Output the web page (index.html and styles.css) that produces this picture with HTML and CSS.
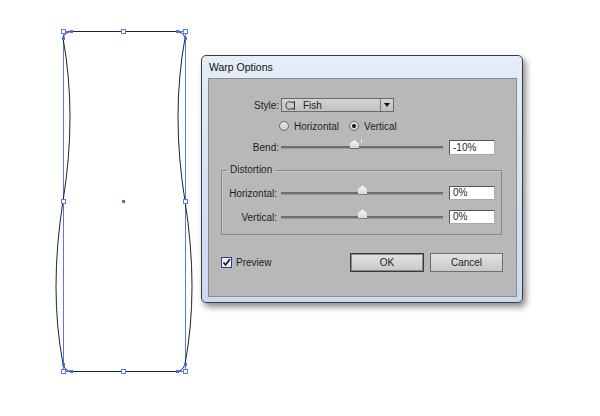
FILE: index.html
```html
<!DOCTYPE html>
<html lang="en">
<head>
  <meta charset="UTF-8" />
  <title>Warp Options</title>
  <link rel="stylesheet" href="styles.css">
</head>
<body>
  <div class="stage">
    <svg class="artboard" width="600" height="416" viewBox="0 0 600 416">
      <rect x="63.5" y="31.5" width="122" height="340" fill="none" stroke="#5876f5" stroke-width="1"/>
      <path d="M71,31.5 L177,31.5 Q183,32 185,38 Q171,115 185,201 Q199,290 185,364 Q183,371 177,371.5 L71,371.5 Q65,371 63,364 Q49,290 63,201 Q77,115 63,38 Q65,32 71,31.5 Z"
            fill="none" stroke="#222" stroke-width="1"/>
      <g fill="#fff" stroke="#5876f5" stroke-width="1">
        <rect x="61.5" y="29.5" width="4" height="4"/>
        <rect x="121.5" y="29.5" width="4" height="4"/>
        <rect x="183.5" y="29.5" width="4" height="4"/>
        <rect x="61.5" y="199.5" width="4" height="4"/>
        <rect x="183.5" y="199.5" width="4" height="4"/>
        <rect x="61.5" y="369.5" width="4" height="4"/>
        <rect x="121.5" y="369.5" width="4" height="4"/>
        <rect x="183.5" y="369.5" width="4" height="4"/>
      </g>
      <g fill="#4a6cf7">
        <rect x="70" y="30" width="3" height="3"/>
        <rect x="62" y="37" width="3" height="3"/>
        <rect x="176" y="30" width="3" height="3"/>
        <rect x="184" y="37" width="3" height="3"/>
        <rect x="62" y="363" width="3" height="3"/>
        <rect x="70" y="370" width="3" height="3"/>
        <rect x="176" y="370" width="3" height="3"/>
        <rect x="184" y="363" width="3" height="3"/>
        <rect x="122" y="200" width="3" height="3"/>
      </g>
    </svg>

    <div class="dialog">
      <div class="title">Warp Options</div>
      <div class="panel">
        <div class="row style-row">
          <span class="label">Style:</span>
          <div class="select">
            <svg class="fish" width="11" height="9" viewBox="0 0 11 9">
              <path d="M7,1.6 C5.2,0 1,0.3 1,4.5 C1,8.7 5.2,9 7,7.4 L9.5,8.5 L9.5,0.5 Z" fill="none" stroke="#333" stroke-width="1"/>
            </svg>
            <span class="select-text">Fish</span>
            <span class="select-btn"><span class="arrow"></span></span>
          </div>
        </div>

        <div class="row radio-row">
          <span class="radio"></span><span class="radio-text">Horizontal</span>
          <span class="radio checked"></span><span class="radio-text">Vertical</span>
        </div>

        <div class="row slider-row bend-row">
          <span class="label">Bend:</span>
          <div class="track">
            <span class="thumb" style="left: 45%"></span>
            <span class="tick"></span>
          </div>
          <div class="field">-10%</div>
        </div>

        <fieldset class="group">
          <legend>Distortion</legend>
          <div class="row slider-row">
            <span class="label small">Horizontal:</span>
            <div class="track"><span class="thumb" style="left: 50%"></span></div>
            <div class="field">0%</div>
          </div>
          <div class="row slider-row second">
            <span class="label small">Vertical:</span>
            <div class="track"><span class="thumb" style="left: 50%"></span></div>
            <div class="field">0%</div>
          </div>
        </fieldset>

        <div class="footer">
          <span class="checkbox">
            <svg width="9" height="9" viewBox="0 0 9 9"><path d="M1.5,4.5 L3.6,7 L7.8,1.2" fill="none" stroke="#111" stroke-width="1.6"/></svg>
          </span>
          <span class="check-text">Preview</span>
          <button class="btn default">OK</button>
          <button class="btn">Cancel</button>
        </div>
      </div>
    </div>
  </div>
</body>
</html>
```

FILE: styles.css
```css
* {
  box-sizing: border-box;
}
body {
  margin: 0;
  background: #fff;
  font-family: 'Liberation Sans', Arial, sans-serif;
  font-size: 10px;
  color: #1e1e1e;
}
.stage {
  position: relative;
  width: 600px;
  height: 416px;
  overflow: hidden;
}
.artboard {
  display: block;
}
.dialog {
  position: absolute;
  left: 201px;
  top: 55px;
  width: 322px;
  height: 248px;
  border: 1px solid #3d3d3d;
  border-radius: 5px;
  background: linear-gradient(#e4edf8, #c9daf0);
  box-shadow: 3px 4px 6px rgba(0, 0, 0, 0.45);
  padding: 0 5px 5px 6px;
  display: flex;
  flex-direction: column;
}
.title {
  height: 22px;
  line-height: 22px;
  padding-left: 1px;
  font-size: 10.5px;
  color: #111;
}
.panel {
  flex: 1;
  background: #b8b8b8;
  border: 1px solid #8c8c8c;
  display: flex;
  flex-direction: column;
}
.row {
  display: flex;
  align-items: center;
}
.label {
  width: 70px;
  margin-right: 2px;
  text-align: right;
}
.label.small {
  width: 55px;
  margin-right: 4px;
}
.style-row {
  margin-top: 19px;
  height: 14px;
}
.select {
  width: 113px;
  height: 14px;
  border: 1px solid #6a6a6a;
  background: linear-gradient(#d4d4d4, #c2c2c2);
  display: flex;
  align-items: center;
}
.fish {
  margin-left: 3px;
}
.select-text {
  margin-left: 7px;
  flex: 1;
}
.select-btn {
  width: 13px;
  height: 100%;
  border-left: 1px solid #7a7a7a;
  display: flex;
  align-items: center;
  justify-content: center;
}
.arrow {
  width: 0;
  height: 0;
  border-left: 3px solid transparent;
  border-right: 3px solid transparent;
  border-top: 4px solid #111;
}
.radio-row {
  margin-top: 7px;
  height: 14px;
  padding-left: 70px;
}
.radio {
  width: 10px;
  height: 10px;
  border-radius: 50%;
  border: 1px solid #6b6b6b;
  background: linear-gradient(#e6e6e6, #cfcfcf);
  display: flex;
  align-items: center;
  justify-content: center;
}
.radio.checked::after {
  content: "";
  width: 4px;
  height: 4px;
  border-radius: 50%;
  background: #111;
}
.radio-text {
  margin-left: 5px;
  margin-right: 10px;
}
.slider-row {
  height: 15px;
}
.bend-row {
  margin-top: 7px;
}
.track {
  position: relative;
  width: 162px;
  height: 3px;
  background: #6e6e6e;
  border-bottom: 1px solid #9a9a9a;
  margin-right: 6px;
}
.thumb {
  position: absolute;
  top: -6px;
  width: 9px;
  height: 9px;
  margin-left: -4px;
  background: linear-gradient(#fafafa, #d6d6d6);
  clip-path: polygon(50% 0, 100% 40%, 100% 100%, 0 100%, 0 40%);
  border-bottom: 1px solid #666;
}
.tick {
  position: absolute;
  left: 80px;
  top: -7px;
  width: 1px;
  height: 4px;
  background: #eee;
}
.field {
  width: 46px;
  height: 15px;
  background: #fff;
  border: 1px solid #555;
  border-right-color: #aaa;
  border-bottom-color: #aaa;
  padding-left: 3px;
  line-height: 13px;
}
.group {
  margin: 9px 14px 0 12px;
  padding: 0 0 10px 0;
  border: 1px solid #888;
  box-shadow: inset 1px 1px 0 #c9c9c9;
  min-width: 0;
}
.group legend {
  margin-left: 5px;
  padding: 0 3px;
  line-height: 12px;
}
.group .slider-row {
  margin-top: 10px;
  height: 14px;
}
.group .slider-row.second {
  margin-top: 10px;
}
.group .field {
  height: 14px;
  line-height: 12px;
}
.footer {
  display: flex;
  align-items: center;
  margin-top: 18px;
  padding: 0 13px 0 12px;
}
.checkbox {
  width: 11px;
  height: 11px;
  border: 1px solid #2b3f9a;
  background: #eef0f6;
  display: flex;
  align-items: center;
  justify-content: center;
}
.check-text {
  margin-left: 4px;
}
.btn {
  font-family: inherit;
  font-size: 10px;
  color: #1e1e1e;
  height: 19px;
  padding: 0;
  background: linear-gradient(#e2e2e2, #c8c8c8);
  border: 1px solid #6e6e6e;
  border-radius: 0;
  width: 73px;
  margin-left: 6px;
}
.btn.default {
  width: 74px;
  margin-left: auto;
  border: 1px solid #3a3a3a;
  box-shadow: inset 0 0 0 1px #8a8a8a;
}
```
